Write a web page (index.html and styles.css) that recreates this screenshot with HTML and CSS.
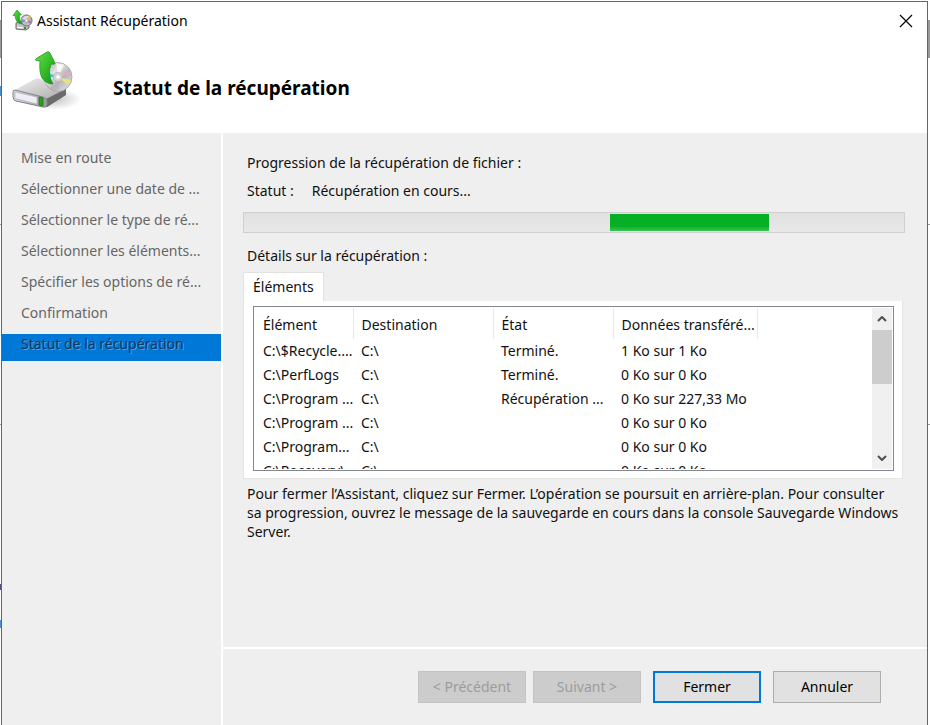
FILE: index.html
```html
<!DOCTYPE html>
<html lang="fr">
<head>
<meta charset="utf-8">
<meta name="viewport" content="width=device-width, initial-scale=1">
<title>Assistant Récupération</title>
<link rel="stylesheet" href="styles.css">
</head>
<body>
<svg class="defs" aria-hidden="true">
  <defs>
    <linearGradient id="arrow" x1="0" y1="0" x2="1" y2="1">
      <stop offset="0" stop-color="#6fdc4e"/><stop offset=".5" stop-color="#35c02b"/><stop offset="1" stop-color="#1c8a1a"/>
    </linearGradient>
    <linearGradient id="top" x1="0" y1="0" x2="1" y2="1">
      <stop offset="0" stop-color="#f2f2f2"/><stop offset="1" stop-color="#a9a9a9"/>
    </linearGradient>
    <linearGradient id="front" x1="0" y1="0" x2="1" y2="0">
      <stop offset="0" stop-color="#d9d9de"/><stop offset="1" stop-color="#9a9a9e"/>
    </linearGradient>
    <linearGradient id="disc" x1="0" y1="0" x2="1" y2="1">
      <stop offset="0" stop-color="#a0a0a0"/><stop offset=".35" stop-color="#e4e4e4"/><stop offset=".6" stop-color="#b5b5b5"/><stop offset="1" stop-color="#ececec"/>
    </linearGradient>
    <radialGradient id="shade">
      <stop offset="0" stop-color="#000" stop-opacity=".25"/><stop offset="1" stop-color="#000" stop-opacity="0"/>
    </radialGradient>
    <symbol id="drive" viewBox="0 0 70 62">
      <ellipse cx="42" cy="48" rx="28" ry="11" fill="url(#shade)"/>
      <path d="M2 41 24 29Q27 28 30 29L53 36Q55 37 55 39L54 44 36 56 5 50Q2 49 2 46Z" fill="#77777a"/>
      <path d="M2 40 24 28Q27 27 30 28L53 35Q55 37 53 39L35 49 4 42Z" fill="url(#top)"/>
      <path d="M35 48 55 38V44L36 56Z" fill="#6b6b6e"/>
      <path d="M2 41Q2 39 4 39L32 46Q36 47 36 50V54Q35 57 32 56L5 50Q2 49 2 46Z" fill="url(#front)" stroke="#858589"/>
      <path d="M4 41 26 46V53L4 47.500Z" fill="#efeef7" stroke="#aaa9b3" stroke-width=".6"/>
      <path d="M28 46 32 47V55L28 54Z" fill="#25a51e" stroke="#146713" stroke-width=".7"/>
      <ellipse cx="47" cy="26" rx="14" ry="14.500" fill="url(#disc)" stroke="#a5a5a5" stroke-width=".8"/>
      <path d="M47 26 36 21 35 26Z" fill="#3bc9dd"/><path d="M47 26 59 20 60 23Z" fill="#e9a6cf"/>
      <path d="M47 26 60 29 57 34Z" fill="#efdf83"/><path d="M47 26 43 38 48 39Z" fill="#c4a8d8" opacity=".5"/>
      <path d="M47 26 45 12 53 14Z" fill="#fff" opacity=".8"/>
      <circle cx="47" cy="26" r="4.500" fill="#d4d4d4" stroke="#aaa" stroke-width=".6"/>
      <circle cx="47" cy="26" r="1.800" fill="#fff"/>
      <path d="M36 1Q38 0 39 2L44 12Q44 14 41 13L40 13.500Q36 23 42 33Q35 33 31 27 28 21 29 10L25 9.500Q23 9 26 7Z" fill="url(#arrow)" stroke="#249b20" stroke-width=".8"/>
    </symbol>
  </defs>
</svg>
<main class="window">
  <header class="head">
    <div class="titlebar">
      <svg class="app-icon" viewBox="0 0 22 22" aria-hidden="true">
        <path d="M4 13 11 11 17 16V18L14 20 4 19Z" fill="#c4c4c8" stroke="#66666a"/>
        <path d="M5 16.500 11 17.500V18.500L5 18Z" fill="#fff"/><path d="M12 17h2v2h-2z" fill="#2b8c28"/>
        <circle cx="14.500" cy="10.500" r="5.500" fill="url(#disc)" stroke="#666"/>
        <path d="M14.500 10.500 17 5 19 8Z" fill="#e5b65f"/><path d="M14.500 10.500 20 11 18 14Z" fill="#a978bb"/><path d="M14.500 10.500 9.500 9 10 13Z" fill="#7790cf"/>
        <circle cx="14.500" cy="10.500" r="1.500" fill="#fff" stroke="#888" stroke-width=".5"/>
        <path d="M5 0 9.500 5H7.500Q6.500 10 10 14 4 14 3 5.500H1Z" fill="url(#arrow)" stroke="#249b20" stroke-width=".7"/>
      </svg>
      <span class="app-title">Assistant Récupération</span>
      <button class="close" type="button" aria-label="Fermer la fenêtre"><svg viewBox="0 0 14 14" aria-hidden="true"><path d="M1 1 13 13M13 1 1 13"/></svg></button>
    </div>
    <div class="banner">
      <svg class="drive" aria-hidden="true"><use href="#drive"/></svg>
      <h1>Statut de la récupération</h1>
    </div>
  </header>
  <div class="body">
    <nav class="steps">
      <ol>
        <li>Mise en route</li>
        <li>Sélectionner une date de ...</li>
        <li>Sélectionner le type de ré...</li>
        <li>Sélectionner les éléments...</li>
        <li>Spécifier les options de ré...</li>
        <li>Confirmation</li>
        <li class="current" aria-current="step">Statut de la récupération</li>
      </ol>
    </nav>
    <div class="pane">
      <section class="content">
        <p class="line">Progression de la récupération de fichier :</p>
        <p class="line status"><span>Statut :</span><span>Récupération en cours...</span></p>
        <div class="progress" role="progressbar" aria-label="Progression"><div class="chunk"></div></div>
        <p class="line">Détails sur la récupération :</p>
        <div class="tabs" role="tablist"><button class="tab" type="button" role="tab" aria-selected="true">Éléments</button></div>
        <div class="panel" role="tabpanel">
          <div class="list">
            <div class="rows">
              <table>
                <colgroup><col class="c1"><col class="c2"><col class="c3"><col class="c4"><col></colgroup>
                <thead><tr><th>Élément</th><th>Destination</th><th>État</th><th>Données transféré...</th><td></td></tr></thead>
                <tbody>
                  <tr><td>C:\$Recycle....</td><td>C:\</td><td>Terminé.</td><td>1 Ko sur 1 Ko</td><td></td></tr>
                  <tr><td>C:\PerfLogs</td><td>C:\</td><td>Terminé.</td><td>0 Ko sur 0 Ko</td><td></td></tr>
                  <tr><td>C:\Program ...</td><td>C:\</td><td>Récupération ...</td><td>0 Ko sur 227,33 Mo</td><td></td></tr>
                  <tr><td>C:\Program ...</td><td>C:\</td><td></td><td>0 Ko sur 0 Ko</td><td></td></tr>
                  <tr><td>C:\Program...</td><td>C:\</td><td></td><td>0 Ko sur 0 Ko</td><td></td></tr>
                  <tr><td>C:\Recovery\</td><td>C:\</td><td></td><td>0 Ko sur 0 Ko</td><td></td></tr>
                </tbody>
              </table>
            </div>
            <div class="scroll">
              <button type="button" aria-label="Défiler vers le haut"><svg viewBox="0 0 10 6" aria-hidden="true"><path d="M1 5 5 1 9 5"/></svg></button>
              <div class="thumb"></div>
              <button type="button" aria-label="Défiler vers le bas"><svg viewBox="0 0 10 6" aria-hidden="true"><path d="M1 1 5 5 9 1"/></svg></button>
            </div>
          </div>
        </div>
        <p class="note">Pour fermer l’Assistant, cliquez sur Fermer. L’opération se poursuit en arrière-plan. Pour consulter sa progression, ouvrez le message de la sauvegarde en cours dans la console Sauvegarde Windows Server.</p>
      </section>
      <footer class="actions">
        <button class="btn" type="button" disabled>&lt; Précédent</button>
        <button class="btn" type="button" disabled>Suivant &gt;</button>
        <button class="btn primary" type="button">Fermer</button>
        <button class="btn" type="button">Annuler</button>
      </footer>
    </div>
  </div>
</main>
</body>
</html>
```
FILE: styles.css
```css
* { box-sizing: border-box; }

body {
  margin: 0;
  min-height: 100vh;
  padding: 1px 2px 0 1px;
  display: flex;
  font: 14px/20px "Noto Sans", "Open Sans", sans-serif;
  color: #111;
  background:
    linear-gradient(#999, #999) right 20px / 2px 38px no-repeat,
    linear-gradient(#999, #999) right 224px / 2px 1px no-repeat,
    linear-gradient(#999, #999) right 424px / 2px 1px no-repeat,
    linear-gradient(#999, #999) left 20px / 1px 38px no-repeat,
    linear-gradient(#4b8fd0, #4b8fd0) left 86px / 1px 10px no-repeat,
    linear-gradient(#999, #999) left 224px / 1px 1px no-repeat,
    linear-gradient(#999, #999) left 424px / 1px 1px no-repeat,
    linear-gradient(#5a4a90, #5a4a90) left 584px / 1px 6px no-repeat,
    linear-gradient(#4b8fd0, #4b8fd0) left 620px / 1px 8px no-repeat,
    #fff;
}

p, h1, ol { margin: 0; padding: 0; font-size: inherit; }
button { font: inherit; color: inherit; margin: 0; padding: 0; border: 0; background: none; border-radius: 0; }
svg { display: block; }
.defs { position: absolute; width: 0; height: 0; }

.window {
  flex: 1;
  min-width: 0;
  display: flex;
  flex-direction: column;
  border: 1px solid #666;
  border-bottom: 0;
  background: #fff;
}

.titlebar { display: flex; align-items: center; height: 38px; padding: 0 14px 0 10px; }
.app-icon { width: 22px; height: 22px; margin-right: 3px; }
.app-title { flex: 1; color: #000; }
.close svg { width: 14px; height: 14px; fill: none; stroke: #000; stroke-width: 1.2; }

.banner { display: flex; align-items: center; height: 93px; padding: 2px 0 0 9px; gap: 32px; }
.banner .drive { width: 70px; height: 62px; align-self: flex-start; margin-top: 9px; }
h1 { font-size: 19px; line-height: 24px; font-weight: 700; color: #000; }

.body { flex: 1; display: flex; gap: 2px; }
.steps { width: 219px; padding-top: 15px; background: #efefef; color: #666; }
.steps ol { list-style: none; display: flex; flex-direction: column; gap: 5px; }
.steps li { height: 26px; padding-left: 19px; white-space: nowrap; }
.steps .current { height: 27px; background: #0078d7; color: #12385f; text-shadow: 1px 1px 0 #4b9fe2; }

.pane { flex: 1; min-width: 0; display: flex; flex-direction: column; gap: 2px; }
.content { flex: 1; padding: 20px 22px 16px 20px; background: #efefef; }
.line { padding-left: 4px; }
.status { display: flex; gap: 18px; margin-top: 8px; }

.progress {
  height: 21px;
  margin: 11px 0 13px;
  padding: 1px 0;
  border: 1px solid #cfcfcf;
  background: linear-gradient(#e1e1e1, #e8e8e8);
}
.chunk { width: 24%; height: 100%; margin-left: 55.5%; background: linear-gradient(#06b025 72%, #3fc157); }

.tabs { display: flex; margin-top: 6px; }
.tab { height: 29px; padding: 0 9px; background: #fff; border: 1px solid #e2e2e2; border-bottom: 0; }
.panel { padding: 5px 8px 7px 9px; margin-right: 2px; background: #fff; border: 1px solid #e4e4e4; border-top: 0; }
.list { display: flex; height: 165px; padding: 1px; border: 1px solid #828790; overflow: hidden; }
.rows { flex: 1; overflow: hidden; }
table { width: 100%; table-layout: fixed; border-collapse: collapse; }
th, td { height: 24px; padding: 0 0 0 8px; font-weight: 400; text-align: left; white-space: nowrap; line-height: 20px; }
th { height: 31px; padding-top: 2px; border-right: 1px solid #e8e8e8; }
.c1 { width: 98px; }
.c2 { width: 140px; }
.c3 { width: 120px; }
.c4 { width: 144px; }

.scroll { width: 20px; display: flex; flex-direction: column; background: #f0f0f0; }
.scroll button { height: 22px; display: grid; place-items: center; }
.scroll button:last-child { margin-top: auto; }
.scroll svg { width: 10px; height: 6px; fill: none; stroke: #505050; stroke-width: 2; }
.thumb { height: 54px; background: #cdcdcd; }

.note { padding: 5px 4px 0; line-height: 19px; }

.actions { display: flex; justify-content: flex-end; height: 76px; padding: 22px 46px 0 0; background: #efefef; }
.btn { width: 108px; height: 32px; margin-left: 12px; border: 1px solid #adadad; background: #e1e1e1; color: #000; }
.btn:disabled { background: #ccc; border-color: #c3c3c3; color: #9c9c9c; }
.btn:disabled + .btn:disabled { margin-left: 7px; }
.btn.primary { border: 2px solid #0078d7; }
```
